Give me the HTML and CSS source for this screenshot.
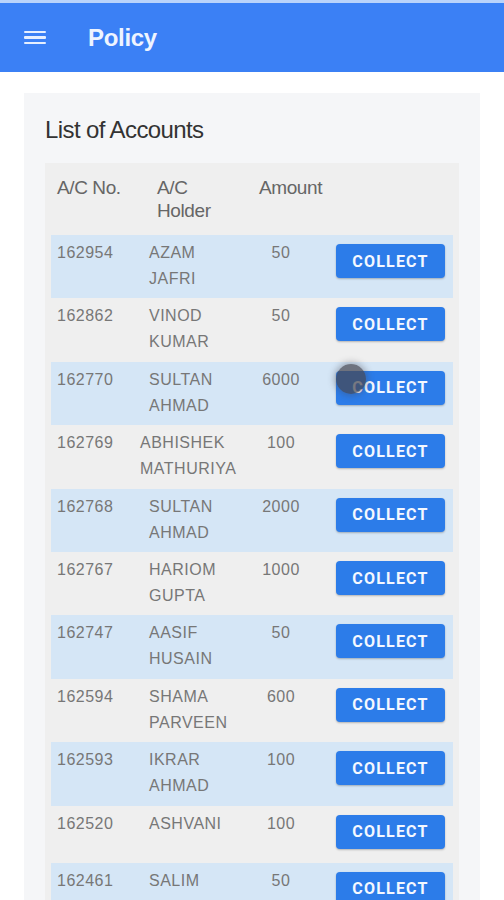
FILE: index.html
```html
<!DOCTYPE html>
<html lang="en">
<head>
    <meta charset="UTF-8">
    <title>Policy</title>
    <link rel="stylesheet" href="styles.css">
</head>
<body>
    <div class="topbar">
        <span class="menu"><i></i><i></i><i></i></span>
        <span class="title">Policy</span>
    </div>
    <div class="page">
        <div class="card">
            <div class="card_title">List of Accounts</div>
            <div class="list">
                <div class="row head">
                    <div class="c_no">A/C No.</div>
                    <div class="c_name">A/C<br>Holder</div>
                    <div class="c_amt">Amount</div>
                    <div></div>
                </div>
                <div class="row">
                    <div class="c_no">162954</div>
                    <div class="c_name">AZAM JAFRI</div>
                    <div class="c_amt">50</div>
                    <div class="c_btn"><button>COLLECT</button></div>
                </div>
                <div class="row">
                    <div class="c_no">162862</div>
                    <div class="c_name">VINOD KUMAR</div>
                    <div class="c_amt">50</div>
                    <div class="c_btn"><button>COLLECT</button></div>
                </div>
                <div class="row">
                    <div class="c_no">162770</div>
                    <div class="c_name">SULTAN AHMAD</div>
                    <div class="c_amt">6000</div>
                    <div class="c_btn"><button>COLLECT</button><span class="touch"></span></div>
                </div>
                <div class="row">
                    <div class="c_no">162769</div>
                    <div class="c_name wide">ABHISHEK MATHURIYA</div>
                    <div class="c_amt">100</div>
                    <div class="c_btn"><button>COLLECT</button></div>
                </div>
                <div class="row">
                    <div class="c_no">162768</div>
                    <div class="c_name">SULTAN AHMAD</div>
                    <div class="c_amt">2000</div>
                    <div class="c_btn"><button>COLLECT</button></div>
                </div>
                <div class="row">
                    <div class="c_no">162767</div>
                    <div class="c_name">HARIOM GUPTA</div>
                    <div class="c_amt">1000</div>
                    <div class="c_btn"><button>COLLECT</button></div>
                </div>
                <div class="row">
                    <div class="c_no">162747</div>
                    <div class="c_name">AASIF HUSAIN</div>
                    <div class="c_amt">50</div>
                    <div class="c_btn"><button>COLLECT</button></div>
                </div>
                <div class="row">
                    <div class="c_no">162594</div>
                    <div class="c_name">SHAMA PARVEEN</div>
                    <div class="c_amt">600</div>
                    <div class="c_btn"><button>COLLECT</button></div>
                </div>
                <div class="row">
                    <div class="c_no">162593</div>
                    <div class="c_name">IKRAR AHMAD</div>
                    <div class="c_amt">100</div>
                    <div class="c_btn"><button>COLLECT</button></div>
                </div>
                <div class="row">
                    <div class="c_no">162520</div>
                    <div class="c_name">ASHVANI</div>
                    <div class="c_amt">100</div>
                    <div class="c_btn"><button>COLLECT</button></div>
                </div>
                <div class="row">
                    <div class="c_no">162461</div>
                    <div class="c_name">SALIM</div>
                    <div class="c_amt">50</div>
                    <div class="c_btn"><button>COLLECT</button></div>
                </div>
            </div>
        </div>
    </div>
</body>
</html>
```

FILE: styles.css
```css
body {
    margin: 0;
    background: #fff;
    font-family: "Liberation Sans", Arial, sans-serif;
    overflow: hidden;
    height: 900px;
}
.topbar {
    display: flex;
    align-items: center;
    height: 69px;
    border-top: 3px solid #b9d3fb;
    background: #3b80f5;
    color: #eef4ff;
}
.menu {
    display: flex;
    flex-direction: column;
    gap: 3px;
    width: 22px;
    margin-left: 24px;
    margin-right: 42px;
}
.menu i {
    display: block;
    height: 2.5px;
    background: #e6efff;
    border-radius: 1px;
}
.title {
    font-size: 24px;
    font-weight: bold;
    letter-spacing: -0.3px;
}
.page {
    padding: 21px 24px 0 24px;
}
.card {
    background: #f5f6f8;
}
.card_title {
    height: 70px;
    padding-left: 21px;
    line-height: 74px;
    font-size: 24px;
    letter-spacing: -0.6px;
    color: #333;
}
.list {
    margin: 0 21px;
    padding: 0 6px;
    background: #efefef;
}
.row {
    display: grid;
    grid-template-columns: 98px 96px 72px 1fr;
    align-items: start;
    padding: 9px 0 14px 0;
    font-size: 16px;
    line-height: 26px;
    letter-spacing: 0.5px;
    color: #777;
}
.row > div {
    margin-top: -4px;
}
.row .c_btn {
    margin-top: 0;
}
.row .c_name {
    margin-bottom: -7.6px;
}
.row:nth-child(even) {
    background: #d5e6f6;
}
.row.head {
    height: 72px;
    box-sizing: border-box;
    padding: 17px 0 0 0;
    font-size: 19px;
    line-height: 23px;
    letter-spacing: -0.4px;
    color: #666;
}
.c_no {
    padding-left: 6px;
}
.head .c_name {
    padding-left: 8px;
}
.c_name.wide {
    margin-left: -9px;
    margin-right: -20px;
}
.c_amt {
    text-align: center;
}
.head .c_amt {
    text-align: left;
    padding-left: 14px;
}
.c_btn {
    position: relative;
    padding-left: 19px;
}
button {
    display: block;
    width: 109px;
    height: 34px;
    border: 0;
    border-radius: 4px;
    background: #2c7ce9;
    color: #f4f8ff;
    font-family: Roboto, "Liberation Sans", sans-serif;
    font-size: 16px;
    font-weight: bold;
    letter-spacing: 1.2px;
    box-shadow: 0 1px 2px rgba(0, 0, 0, 0.25);
}
.touch {
    position: absolute;
    left: 19px;
    top: -7px;
    width: 30px;
    height: 30px;
    border-radius: 50%;
    background: rgba(70, 70, 80, 0.72);
    box-shadow: 0 0 6px 2px rgba(70, 70, 80, 0.35);
}
```
